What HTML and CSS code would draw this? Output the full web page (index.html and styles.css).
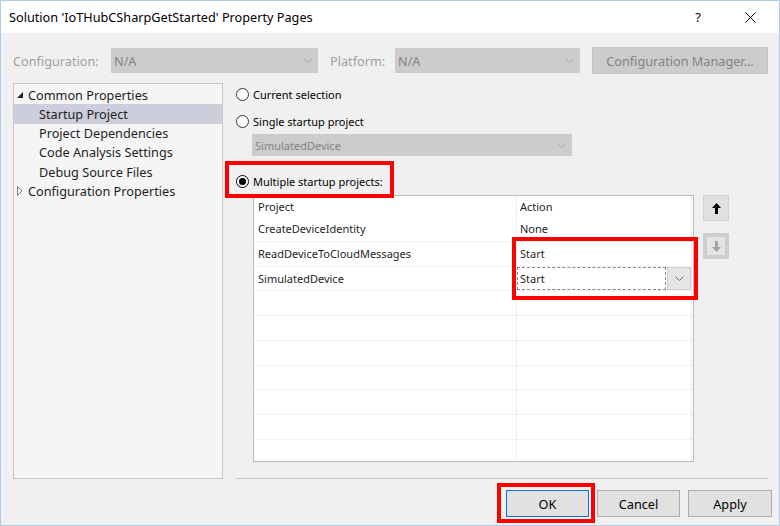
FILE: index.html
```html
<!DOCTYPE html>
<html>
<head>
<meta charset="utf-8">
<title>Property Pages</title>
<link rel="stylesheet" href="styles.css">
</head>
<body>
<div class="window">
  <div class="titlebar">
    <div class="title">Solution 'IoTHubCSharpGetStarted' Property Pages</div>
    <div class="tb-buttons">
      <span class="tb-btn tb-help">?</span>
      <span class="tb-btn tb-close"><svg width="11" height="11" viewBox="0 0 11 11"><path d="M0.5 0.5 L10.5 10.5 M10.5 0.5 L0.5 10.5" stroke="#000" stroke-width="1" fill="none"/></svg></span>
    </div>
  </div>
  <div class="content">
    <div class="config-row">
      <span class="label disabled lbl-config">Configuration:</span>
      <div class="combo disabled combo-config"><span class="combo-text">N/A</span><svg class="chev" width="9" height="5" viewBox="0 0 9 5"><path d="M0.5 0.5 L4.5 4.5 L8.5 0.5" stroke="#a9a9a9" fill="none"/></svg></div>
      <span class="label disabled lbl-platform">Platform:</span>
      <div class="combo disabled combo-platform"><span class="combo-text">N/A</span><svg class="chev" width="9" height="5" viewBox="0 0 9 5"><path d="M0.5 0.5 L4.5 4.5 L8.5 0.5" stroke="#a9a9a9" fill="none"/></svg></div>
      <div class="btn disabled btn-cfgmgr">Configuration Manager...</div>
    </div>
    <div class="main">
      <div class="tree">
        <div class="tree-item level0"><svg class="twisty" width="6" height="6" viewBox="0 0 6 6"><path d="M6 0 L6 6 L0 6 Z" fill="#262626"/></svg>Common Properties</div>
        <div class="tree-item level1 selected">Startup Project</div>
        <div class="tree-item level1">Project Dependencies</div>
        <div class="tree-item level1">Code Analysis Settings</div>
        <div class="tree-item level1">Debug Source Files</div>
        <div class="tree-item level0"><svg class="twisty" width="6" height="10" viewBox="0 0 6 10"><path d="M0.5 0.5 L5 5 L0.5 9.5 Z" fill="none" stroke="#7a7a7a" stroke-width="1"/></svg>Configuration Properties</div>
      </div>
      <div class="panel">
        <div class="radio-row r1"><span class="radio"></span>Current selection</div>
        <div class="radio-row r2"><span class="radio"></span>Single startup project</div>
        <div class="combo disabled combo-single"><span class="combo-text">SimulatedDevice</span><svg class="chev" width="9" height="5" viewBox="0 0 9 5"><path d="M0.5 0.5 L4.5 4.5 L8.5 0.5" stroke="#a9a9a9" fill="none"/></svg></div>
        <div class="radio-row r3"><span class="radio checked"></span>Multiple startup projects:<span class="highlight hl-multi"></span></div>
        <div class="grid-area">
          <div class="grid">
            <div class="grid-row header"><div class="cell c1">Project</div><div class="cell c2">Action</div><div class="cell c3"></div></div>
            <div class="grid-row"><div class="cell c1">CreateDeviceIdentity</div><div class="cell c2">None</div><div class="cell c3"></div></div>
            <div class="grid-row"><div class="cell c1">ReadDeviceToCloudMessages</div><div class="cell c2">Start</div><div class="cell c3"></div></div>
            <div class="grid-row"><div class="cell c1">SimulatedDevice</div><div class="cell c2 editing"><div class="edit-combo">Start</div><div class="edit-drop"><svg width="9" height="5" viewBox="0 0 9 5"><path d="M0.5 0.5 L4.5 4.5 L8.5 0.5" stroke="#707070" fill="none"/></svg></div></div><div class="cell c3"></div></div>
            <div class="grid-row"><div class="cell c1"></div><div class="cell c2"></div><div class="cell c3"></div></div>
            <div class="grid-row"><div class="cell c1"></div><div class="cell c2"></div><div class="cell c3"></div></div>
            <div class="grid-row"><div class="cell c1"></div><div class="cell c2"></div><div class="cell c3"></div></div>
            <div class="grid-row"><div class="cell c1"></div><div class="cell c2"></div><div class="cell c3"></div></div>
            <div class="grid-row"><div class="cell c1"></div><div class="cell c2"></div><div class="cell c3"></div></div>
            <div class="grid-row"><div class="cell c1"></div><div class="cell c2"></div><div class="cell c3"></div></div>
            <div class="grid-row"><div class="cell c1"></div><div class="cell c2"></div><div class="cell c3"></div></div>
          </div>
          <div class="move-buttons">
            <div class="move-btn up"><svg width="9" height="11" viewBox="0 0 9 11"><path d="M4.5 0 L9 5 L6 5 L6 11 L3 11 L3 5 L0 5 Z" fill="#000"/></svg></div>
            <div class="move-btn down"><svg width="9" height="11" viewBox="0 0 9 11"><path d="M3 0 L6 0 L6 6 L9 6 L4.5 11 L0 6 L3 6 Z" fill="#a2a2a2"/></svg></div>
          </div>
          <span class="highlight hl-start"></span>
        </div>
        <div class="separator"></div>
      </div>
    </div>
    <div class="footer">
      <div class="btn default btn-ok">OK<span class="highlight hl-ok"></span></div>
      <div class="btn btn-cancel">Cancel</div>
      <div class="btn btn-apply">Apply</div>
    </div>
  </div>
</div>
</body>
</html>
```

FILE: styles.css
```css
* { box-sizing: border-box; }
html, body { margin: 0; padding: 0; }
body {
  font-family: "Noto Sans", "Open Sans", sans-serif;
  font-size: 12.7px;
  color: #000;
  background: #f0f0f0;
}
.window {
  width: 780px;
  height: 526px;
  border: 1px solid #aecbeb;
  background: #f0f0f0;
  display: flex;
  flex-direction: column;
  overflow: hidden;
}
.titlebar {
  height: 32px;
  flex: none;
  background: #fff;
  display: flex;
  align-items: center;
  padding-left: 8px;
  padding-right: 6px;
}
.title { white-space: nowrap; }
.tb-buttons { margin-left: auto; display: flex; gap: 6px; }
.tb-btn {
  width: 46px; height: 32px;
  display: flex; align-items: center; justify-content: center;
}
.tb-help { font-size: 13px; }
.content {
  flex: 1;
  padding: 0 7px 0 12px;
  display: flex;
  flex-direction: column;
}
.config-row {
  margin-top: 14px;
  height: 27px;
  display: flex;
  align-items: center;
}
.label { white-space: nowrap; flex: none; }
.disabled.label { color: #a0a0a0; }
.lbl-config { width: 98px; }
.lbl-platform { width: 65px; margin-left: 12px; }
.combo {
  height: 25px;
  display: flex;
  align-items: center;
  border: 1px solid #cccccc;
  flex: none;
}
.combo.disabled { background: #cccccc; color: #838383; }
.combo-text { padding-left: 2px; flex: 1; white-space: nowrap; }
.chev { margin-right: 5px; }
.combo-config { width: 207px; }
.combo-platform { width: 185px; }
.btn {
  height: 27px;
  display: flex;
  align-items: center;
  justify-content: center;
  background: #e1e1e1;
  border: 1px solid #adadad;
  flex: none;
  position: relative;
  white-space: nowrap;
}
.btn.disabled { background: #cccccc; border-color: #c4c4c4; color: #838383; }
.btn-cfgmgr { width: 176px; margin-left: 12px; }
.main {
  margin-top: 9px;
  height: 396px;
  display: flex;
  flex: none;
}
.tree {
  width: 210px;
  height: 396px;
  border: 1px solid #c6c6c6;
  background: #f5f5f5;
  padding-top: 1px;
  flex: none;
}
.tree-item {
  height: 19.25px;
  display: flex;
  align-items: center;
  color: #1e1e1e;
  white-space: nowrap;
}
.tree-item.level0 { padding-left: 3px; }
.tree-item.level0 .twisty { margin-right: 5px; flex: none; }
.tree-item.level1 { padding-left: 25px; }
.tree-item.selected { background: #cccedb; }
.panel {
  margin-left: 13px;
  width: 532px;
  display: flex;
  flex-direction: column;
  flex: none;
  font-size: 11px;
}
.radio-row {
  height: 20px;
  display: flex;
  align-items: center;
  position: relative;
  white-space: nowrap;
}
.r1 { margin-top: 1px; }
.r2 { margin-top: 7px; }
.r3 { margin-top: 15px; }
.radio {
  width: 13px; height: 13px;
  border: 1px solid #333;
  border-radius: 50%;
  background: #fff;
  margin-right: 4px;
  flex: none;
  display: flex;
  align-items: center;
  justify-content: center;
}
.radio.checked { border-color: #000; }
.radio.checked::after {
  content: "";
  width: 7px; height: 7px;
  border-radius: 50%;
  background: #000;
}
.combo-single {
  margin-top: 3px;
  margin-left: 16px;
  width: 320px;
  height: 22px;
}
.grid-area {
  margin-top: 4px;
  display: flex;
  position: relative;
}
.grid {
  margin-left: 17px;
  width: 441px;
  height: 267px;
  border: 1px solid #bcbcbc;
  background: #fff;
  overflow: hidden;
  flex: none;
}
.grid-row {
  display: grid;
  grid-template-columns: 263px 175px 1fr;
  height: 24.75px;
  border-bottom: 1px solid #f0f0f0;
  color: #1e1e1e;
}
.grid-row.header { height: 21px; border-bottom: none; }
.cell {
  display: flex;
  align-items: center;
  white-space: nowrap;
  border-right: 1px solid #ececf3;
}
.c1 { padding-left: 4px; }
.c2 { padding-left: 3px; }
.c3 { border-right: none; }
.cell.editing { padding-left: 0; gap: 1px; }
.edit-combo {
  width: 149px;
  height: 23px;
  border: 1px dashed #8a8a8a;
  padding-left: 2px;
  display: flex;
  align-items: center;
}
.edit-drop {
  width: 24px;
  height: 23px;
  background: #e5e5e5;
  border: 1px solid #cfcfcf;
  display: flex;
  align-items: center;
  justify-content: center;
}
.move-buttons {
  margin-left: 9px;
  display: flex;
  flex-direction: column;
  gap: 12px;
}
.move-btn {
  width: 26px; height: 26px;
  display: flex; align-items: center; justify-content: center;
}
.move-btn.up { background: #e0e0e0; border: 1px solid #d4d4d4; }
.move-btn.down { background: #e4e4e4; border: 4px solid #cdcdcd; }
.separator {
  margin-top: auto;
  border-top: 1px solid #c6c6c6;
}
.footer {
  margin-top: 11px;
  display: flex;
  justify-content: flex-end;
  gap: 8px;
}
.btn-ok { width: 83px; border-color: #0078d7; }
.btn-cancel { width: 83px; }
.btn-apply { width: 84px; }
.highlight {
  position: absolute;
  border: 4px solid #ff0000;
  pointer-events: none;
  z-index: 5;
}
.hl-multi { left: -11px; top: -10px; width: 169px; height: 37px; }
.hl-start { left: 276px; top: 42px; width: 186px; height: 63px; }
.hl-ok { left: -10px; top: -8px; width: 98px; height: 40px; }
```
